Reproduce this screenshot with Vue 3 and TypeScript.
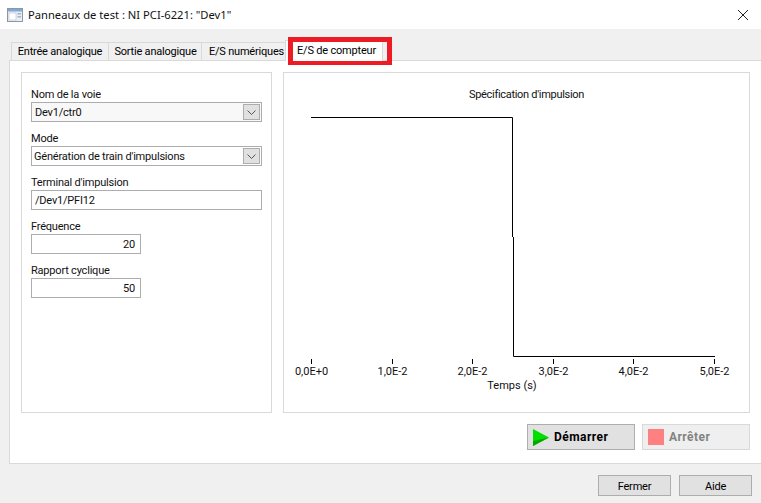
<template>
  <div class="dialog">
    <header class="titlebar">
      <svg class="app-icon" width="16" height="14" viewBox="0 0 16 14">
        <rect x="0.5" y="0.5" width="15" height="13" fill="#e8eef5" stroke="#8a97a6" />
        <rect x="1" y="1" width="14" height="2.5" fill="#7fa8d6" />
        <rect x="2" y="5" width="7" height="7" fill="#fff" stroke="#b5c0cc" stroke-width="0.6" />
        <rect x="10.5" y="5" width="3.5" height="1.5" fill="#a8b4c2" />
        <rect x="10.5" y="8" width="3.5" height="1.5" fill="#a8b4c2" />
      </svg>
      <span class="title">Panneaux de test : NI PCI-6221: "Dev1"</span>
      <svg class="close" width="12" height="12" viewBox="0 0 12 12">
        <path d="M1 1L11 11M11 1L1 11" stroke="#222" stroke-width="1" fill="none" />
      </svg>
    </header>

    <main class="body">
      <div class="tabs">
        <div
          v-for="tab in tabs"
          :key="tab.label"
          class="tab"
          :class="{ active: tab.active }"
          :style="{ width: tab.width + 'px', paddingLeft: tab.pad + 'px' }"
        >
          {{ tab.label }}
        </div>
        <div class="tab-highlight"></div>
      </div>

      <section class="tab-panel">
        <div class="panes">
          <div class="form-pane">
            <div class="field">
              <label>Nom de la voie</label>
              <div class="input combo grey">
                <span>Dev1/ctr0</span>
                <span class="arrow">
                  <svg width="9" height="5" viewBox="0 0 9 5"><path d="M0.5 0.5L4.5 4.5L8.5 0.5" stroke="#555" fill="none" /></svg>
                </span>
              </div>
            </div>
            <div class="field">
              <label>Mode</label>
              <div class="input combo tight">
                <span>Génération de train d'impulsions</span>
                <span class="arrow">
                  <svg width="9" height="5" viewBox="0 0 9 5"><path d="M0.5 0.5L4.5 4.5L8.5 0.5" stroke="#555" fill="none" /></svg>
                </span>
              </div>
            </div>
            <div class="field">
              <label>Terminal d'impulsion</label>
              <div class="input">/Dev1/PFI12</div>
            </div>
            <div class="field">
              <label>Fréquence</label>
              <div class="input number">20</div>
            </div>
            <div class="field">
              <label>Rapport cyclique</label>
              <div class="input number">50</div>
            </div>
          </div>

          <div class="chart-pane">
            <svg class="chart" width="465" height="339" viewBox="0 0 465 339">
              <text class="chart-text chart-title" x="242.5" y="25" text-anchor="middle">Spécification d'impulsion</text>
              <path d="M27 44.5H228.5V164M229.5 164V283.5H431" stroke="#000" fill="none" />
              <g v-for="tick in ticks" :key="tick.label">
                <line :x1="tick.x" :x2="tick.x" y1="286" y2="291" stroke="#000" />
                <text class="chart-text" :x="tick.x" y="302" text-anchor="middle">{{ tick.label }}</text>
              </g>
              <text class="chart-text" x="228" y="316" text-anchor="middle">Temps (s)</text>
            </svg>
          </div>
        </div>

        <div class="run-buttons">
          <button class="btn run">
            <svg width="16" height="17" viewBox="0 0 16 17">
              <path d="M0 0L16 8.5L0 17Z" fill="#00e000" />
              <path d="M0 17L16 8.5L0 12Z" fill="#00a800" />
            </svg>
            <span>Démarrer</span>
          </button>
          <button class="btn run disabled">
            <span class="stop-icon"></span>
            <span>Arrêter</span>
          </button>
        </div>
      </section>

      <footer class="footer">
        <button class="btn foot">Fermer</button>
        <button class="btn foot">Aide</button>
      </footer>
    </main>
  </div>
</template>

<script setup lang="ts">
const tabs = [
  { label: 'Entrée analogique', width: 98, pad: 0, active: false },
  { label: 'Sortie analogique', width: 94, pad: 1, active: false },
  { label: 'E/S numériques', width: 85, pad: 6, active: false },
  { label: 'E/S de compteur', width: 98, pad: 5, active: true }
]

const ticks = [
  { label: '0,0E+0', x: 27.5 },
  { label: '1,0E-2', x: 108.5 },
  { label: '2,0E-2', x: 188.5 },
  { label: '3,0E-2', x: 269.5 },
  { label: '4,0E-2', x: 349.5 },
  { label: '5,0E-2', x: 430.5 }
]
</script>

<style scoped>
.dialog {
  width: 761px;
  height: 503px;
  display: flex;
  flex-direction: column;
  overflow: hidden;
  background: #fff;
  font-family: Roboto, "Liberation Sans", Arial, sans-serif;
  font-size: 11px;
  letter-spacing: -0.2px;
  color: #000;
}

.titlebar {
  height: 29px;
  flex: none;
  display: flex;
  align-items: center;
  padding: 0 12px 0 7px;
  background: #fff;
}
.app-icon { margin-right: 5px; }
.title {
  font-family: "Noto Sans", "Liberation Sans", Arial, sans-serif;
  font-size: 11.2px;
  letter-spacing: 0;
  color: #111;
}
.close { margin-left: auto; }

.body {
  flex: 1;
  min-height: 0;
  display: flex;
  flex-direction: column;
  background: #f0f0f0;
  padding-top: 13px;
}

.tabs {
  position: relative;
  display: flex;
  height: 18px;
  margin-left: 11px;
}
.tab {
  box-sizing: border-box;
  height: 18px;
  line-height: 17px;
  text-align: center;
  white-space: nowrap;
  background: #f0f0f0;
  border: 1px solid #d9d9d9;
  border-bottom: none;
  margin-right: -1px;
}
.tab.active {
  position: relative;
  z-index: 1;
  height: 21px;
  margin-top: -2px;
  line-height: 20px;
  background: #fff;
}
.tab-highlight {
  position: absolute;
  left: 277px;
  top: -5px;
  width: 104px;
  height: 28px;
  box-sizing: border-box;
  border: 5px solid #ed1c24;
  border-bottom-width: 4px;
  z-index: 2;
}

.tab-panel {
  box-sizing: border-box;
  height: 404px;
  flex: none;
  margin-left: 9px;
  width: 760px;
  background: #fff;
  border: 1px solid #d9d9d9;
  padding: 11px 0 0 11px;
}

.panes {
  display: flex;
  gap: 11px;
  height: 341px;
}

.form-pane {
  box-sizing: border-box;
  width: 251px;
  border: 1px solid #d9d9d9;
  padding: 13px 9px 0;
}
.chart-pane {
  box-sizing: border-box;
  width: 467px;
  border: 1px solid #d9d9d9;
}
.chart { display: block; }
.chart-text {
  font-family: Roboto, "Liberation Sans", Arial, sans-serif;
  font-size: 11px;
  letter-spacing: 0;
  fill: #111;
}
.chart-title { letter-spacing: -0.3px; }

.field { margin-bottom: 8px; }
.field label {
  display: block;
  height: 16px;
  line-height: 18px;
  color: #111;
}
.input {
  box-sizing: border-box;
  height: 20px;
  width: 231px;
  border: 1px solid #adadad;
  background: #fff;
  line-height: 19px;
  padding: 0 1px 0 3px;
  color: #111;
}
.combo {
  display: flex;
  justify-content: space-between;
}
.combo.grey { background: #f8f8f8; }
.combo.tight { padding-left: 2px; }
.arrow {
  width: 17px;
  height: 16px;
  margin-top: 1px;
  display: flex;
  align-items: center;
  justify-content: center;
  background: #e1e1e1;
  border: 1px solid #adadad;
  box-sizing: border-box;
}
.number {
  width: 110px;
  text-align: right;
  padding-right: 5px;
}

.run-buttons {
  display: flex;
  justify-content: flex-end;
  gap: 7px;
  margin-top: 11px;
  padding-right: 18px;
}

.btn {
  box-sizing: border-box;
  font-family: Roboto, "Liberation Sans", Arial, sans-serif;
  font-size: 11px;
  background: #e1e1e1;
  border: 1px solid #adadad;
  color: #000;
  padding: 0;
}
.run {
  width: 108px;
  height: 26px;
  display: flex;
  align-items: center;
  gap: 5px;
  padding-left: 5px;
  font-size: 12px;
  letter-spacing: 0.45px;
  font-weight: 700;
}
.disabled {
  background: #efefef;
  border-color: #d9d9d9;
  color: #838383;
}
.stop-icon {
  width: 16px;
  height: 16px;
  background: #ff8080;
}

.footer {
  display: flex;
  justify-content: flex-end;
  gap: 8px;
  padding: 11px 9px 0 0;
}
.foot {
  width: 73px;
  height: 21px;
  padding-top: 1px;
  letter-spacing: -0.2px;
}
</style>

<style>
html, body { margin: 0; background: #fff; }
</style>
